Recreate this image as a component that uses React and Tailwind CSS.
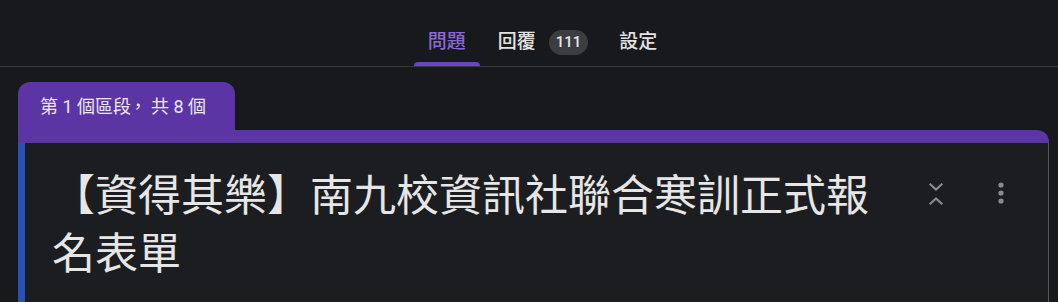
import React from 'react'

const font = { fontFamily: 'Roboto, "Noto Sans CJK TC", "Noto Sans", sans-serif' }

const Tabs = () => (
  <div className="h-[67px] border-b border-[#3a3b3e] flex justify-center">
    <div className="flex items-stretch ml-[27px]">
      <div className="relative px-[14px] pb-[10px] flex items-end text-[19px] font-medium text-[#8b6ad8]">
        問題
        <span className="absolute left-0 right-0 bottom-0 h-[4px] rounded-t-[4px] bg-[#6a45c2]" />
      </div>
      <div className="flex items-end pb-[10px] ml-[4px] px-[14px] text-[19px] font-medium text-[#e3e3e3]">
        回覆
        <span className="ml-[13px] mb-[1px] h-[25px] px-[7px] rounded-full bg-[#3c3d41] text-[15px] text-[#e8e8e8] flex items-center">
          111
        </span>
      </div>
      <div className="flex items-end pb-[10px] ml-[3px] px-[14px] text-[19px] font-medium text-[#e3e3e3]">
        設定
      </div>
    </div>
  </div>
)

const CollapseIcon = () => (
  <svg width="16" height="26" viewBox="0 0 16 26" fill="none" stroke="#8a8b8f" strokeWidth="2.2" strokeLinecap="square">
    <path d="M2.5 3.5 L8 8.5 L13.5 3.5" />
    <path d="M2.5 22.5 L8 17.5 L13.5 22.5" />
  </svg>
)

const MoreIcon = () => (
  <svg width="8" height="24" viewBox="0 0 8 24" fill="#8a8b8f">
    <circle cx="4" cy="4" r="2.6" />
    <circle cx="4" cy="12" r="2.6" />
    <circle cx="4" cy="20" r="2.6" />
  </svg>
)

export default function App() {
  return (
    <div className="w-[1058px] h-[302px] overflow-hidden bg-[#18191c]" style={font}>
      <Tabs />
      <div className="ml-[18px] mr-[9px] pt-[15px]">
        <div className="w-[217px] h-[48px] rounded-t-[12px] bg-[#5b35a4] flex items-center pl-[22px] text-[18px] text-[#ece6f7]">
          第 1 個區段<span className="inline-block w-[22px] -ml-[2px]">，</span>共 8 個
        </div>
        <div className="h-[13px] bg-[#5b35a4] rounded-tr-[12px]" />
        <div className="flex border-l-[7px] border-[#2a50b8] border-r border-r-[#55565a] bg-[#1c1d20] h-[200px]">
          <div className="pl-[27px] pt-[24px] w-[866px] text-[43px] leading-[58px] text-[#e6e6e6]">
            【資得其樂】南九校資訊社聯合寒訓正式報名表單
          </div>
          <div className="flex items-start pt-[38px] ml-[37px] gap-[53px]">
            <CollapseIcon />
            <MoreIcon />
          </div>
        </div>
      </div>
    </div>
  )
}
